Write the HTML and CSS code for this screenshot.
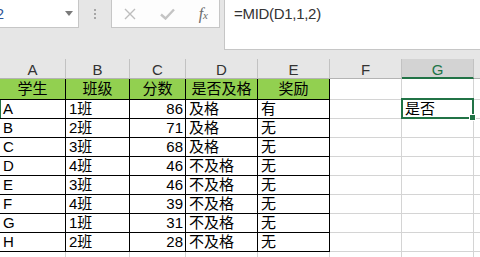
FILE: index.html
```html
<!DOCTYPE html>
<html lang="zh-CN">
<head>
  <meta charset="UTF-8">
  <title>成绩表</title>
  <link rel="stylesheet" href="styles.css">
</head>
<body>
  <!-- 编辑栏 -->
  <div class="fbar">
    <div class="namebox">
      <span class="ref">G2</span>
      <svg class="drop" width="8" height="5" viewBox="0 0 8 5"><path d="M0 0H8L4 5Z" fill="#7a7a7a"/></svg>
    </div>
    <div class="grip"><i></i><i></i><i></i></div>
    <div class="btns">
      <svg width="12" height="12" viewBox="0 0 12 12"><path d="M1 1L11 11M11 1L1 11" stroke="#bdbdbd" stroke-width="1.4"/></svg>
      <svg width="15" height="12" viewBox="0 0 15 12"><path d="M1 6.5L5.5 10.5L14 1.5" stroke="#c4c4c4" stroke-width="2.4" fill="none"/></svg>
      <span class="fx">f<small>x</small></span>
    </div>
    <div class="formula">=MID(D1,1,2)</div>
  </div>

  <!-- 工作表 -->
  <div class="sheet">
    <div class="colhead">A</div>
    <div class="colhead">B</div>
    <div class="colhead">C</div>
    <div class="colhead">D</div>
    <div class="colhead">E</div>
    <div class="colhead">F</div>
    <div class="colhead active">G</div>
    <div class="colhead"></div>

    <div class="cell th">学生</div>
    <div class="cell th">班级</div>
    <div class="cell th">分数</div>
    <div class="cell th">是否及格</div>
    <div class="cell th">奖励</div>
    <div class="cell"></div>
    <div class="cell"></div>
    <div class="cell"></div>

    <div class="cell td rowsel">A</div>
    <div class="cell td">1班</div>
    <div class="cell td num">86</div>
    <div class="cell td">及格</div>
    <div class="cell td">有</div>
    <div class="cell"></div>
    <div class="cell selected">是否<span class="handle"></span></div>
    <div class="cell"></div>

    <div class="cell td">B</div>
    <div class="cell td">2班</div>
    <div class="cell td num">71</div>
    <div class="cell td">及格</div>
    <div class="cell td">无</div>
    <div class="cell"></div>
    <div class="cell"></div>
    <div class="cell"></div>

    <div class="cell td">C</div>
    <div class="cell td">3班</div>
    <div class="cell td num">68</div>
    <div class="cell td">及格</div>
    <div class="cell td">无</div>
    <div class="cell"></div>
    <div class="cell"></div>
    <div class="cell"></div>

    <div class="cell td">D</div>
    <div class="cell td">4班</div>
    <div class="cell td num">46</div>
    <div class="cell td">不及格</div>
    <div class="cell td">无</div>
    <div class="cell"></div>
    <div class="cell"></div>
    <div class="cell"></div>

    <div class="cell td">E</div>
    <div class="cell td">3班</div>
    <div class="cell td num">46</div>
    <div class="cell td">不及格</div>
    <div class="cell td">无</div>
    <div class="cell"></div>
    <div class="cell"></div>
    <div class="cell"></div>

    <div class="cell td">F</div>
    <div class="cell td">4班</div>
    <div class="cell td num">39</div>
    <div class="cell td">不及格</div>
    <div class="cell td">无</div>
    <div class="cell"></div>
    <div class="cell"></div>
    <div class="cell"></div>

    <div class="cell td">G</div>
    <div class="cell td">1班</div>
    <div class="cell td num">31</div>
    <div class="cell td">不及格</div>
    <div class="cell td">无</div>
    <div class="cell"></div>
    <div class="cell"></div>
    <div class="cell"></div>

    <div class="cell td">H</div>
    <div class="cell td">2班</div>
    <div class="cell td num">28</div>
    <div class="cell td">不及格</div>
    <div class="cell td">无</div>
    <div class="cell"></div>
    <div class="cell"></div>
    <div class="cell"></div>

    <div class="cell"></div>
    <div class="cell"></div>
    <div class="cell"></div>
    <div class="cell"></div>
    <div class="cell"></div>
    <div class="cell"></div>
    <div class="cell"></div>
    <div class="cell"></div>
  </div>
</body>
</html>
```

FILE: styles.css
```css
body {
  margin: 0;
  width: 480px;
  height: 257px;
  overflow: hidden;
  background: #e6e6e6;
  font-family: "Liberation Sans", "Noto Sans CJK SC", sans-serif;
  font-size: 15px;
  color: #000;
}

/* 编辑栏 */
.fbar {
  display: flex;
  align-items: flex-start;
  height: 59px;
}

.namebox {
  display: flex;
  align-items: center;
  justify-content: space-between;
  box-sizing: border-box;
  width: 99px;
  height: 28px;
  margin-left: -20px;
  padding: 0 5px 0 3px;
  background: #fff;
  border: 1px solid #c6c6c6;
  border-top: none;
  color: #2f5597;
}

.grip {
  display: flex;
  flex-direction: column;
  gap: 2px;
  margin: 9px 15px 0 15px;
}

.grip i {
  display: block;
  width: 2px;
  height: 2px;
  background: #a6a6a6;
}

.btns {
  display: flex;
  align-items: center;
  justify-content: space-between;
  box-sizing: border-box;
  width: 109px;
  height: 28px;
  padding: 0 11px 0 12px;
  background: #fdfdfd;
  border: 1px solid #c6c6c6;
  border-top: none;
}

.fx {
  font-family: "Liberation Serif", serif;
  font-style: italic;
  font-size: 16px;
  color: #6b6b6b;
}

.fx small {
  font-size: 11px;
}

.formula {
  flex: 1;
  box-sizing: border-box;
  height: 50px;
  margin-left: 4px;
  padding: 4px 0 0 9px;
  background: #fff;
  border-left: 1px solid #c6c6c6;
  border-bottom: 1px solid #c6c6c6;
  color: #333;
  font-size: 15px;
  letter-spacing: -0.3px;
  line-height: 20px;
}

/* 工作表 */
.sheet {
  display: grid;
  grid-template-columns: 66px 64px 56px 72px 72px 72px 72px 1fr;
  grid-template-rows: 20px 21px repeat(8, 19px) 6px;
  background: #fff;
}

.colhead {
  box-sizing: border-box;
  background: #e6e6e6;
  border-right: 1px solid #c2c2c2;
  border-bottom: 1px solid #b4b4b4;
  text-align: center;
  line-height: 21px;
  color: #333;
  font-size: 15px;
}

.colhead.active {
  background: #d3d3d3;
  border-bottom: 2px solid #217346;
  color: #217346;
}

.cell {
  position: relative;
  box-sizing: border-box;
  border-right: 1px solid #d4d4d4;
  border-bottom: 1px solid #d4d4d4;
  padding: 0 3px;
  line-height: 18px;
  white-space: nowrap;
}

.th {
  background: #92d050;
  border-right-color: #000;
  border-bottom-color: #000;
  text-align: center;
  line-height: 20px;
}

.td {
  border-right-color: #000;
  border-bottom-color: #000;
}

.num {
  text-align: right;
  padding-right: 2px;
}

.rowsel {
  box-shadow: inset 1px 0 #217346;
}

.selected::after {
  content: "";
  position: absolute;
  top: -2px;
  left: -1px;
  right: -1px;
  bottom: -1px;
  border: 2px solid #217346;
}

.handle {
  position: absolute;
  right: -3px;
  bottom: -3px;
  width: 5px;
  height: 5px;
  background: #217346;
  border: 1px solid #fff;
  z-index: 1;
}
```
